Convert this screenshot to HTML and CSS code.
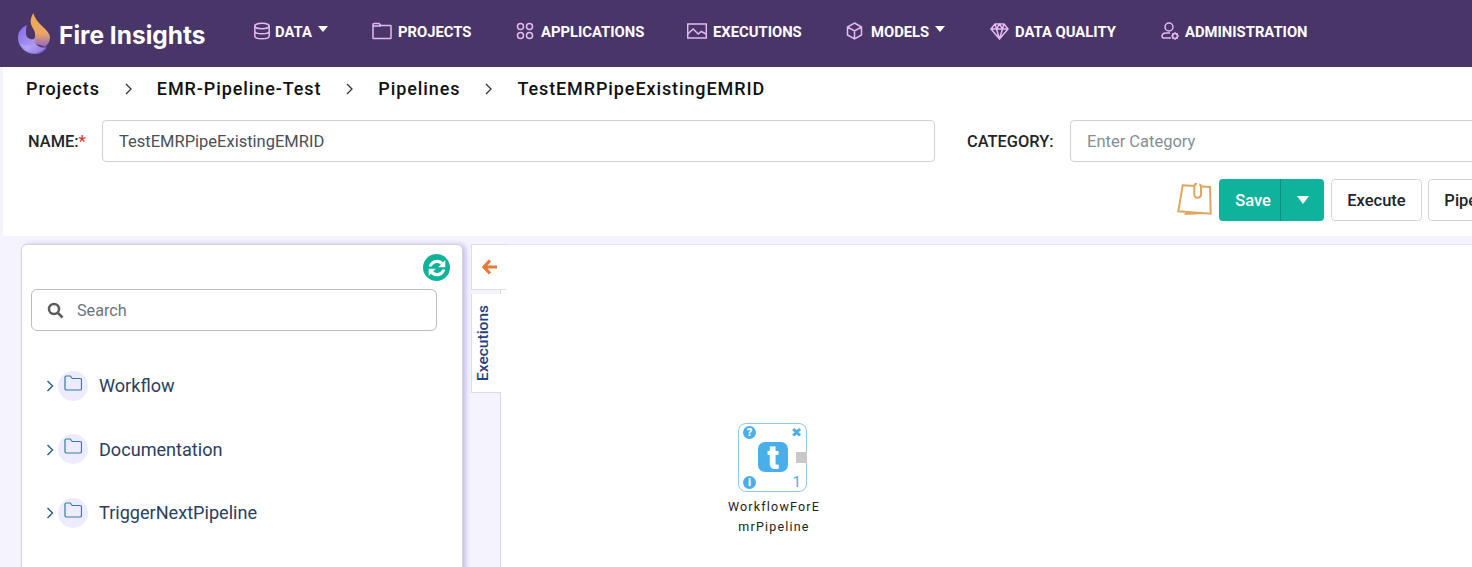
FILE: index.html
```html
<!DOCTYPE html>
<html lang="en">
<head>
    <meta charset="UTF-8">
    <meta name="viewport" content="width=device-width, initial-scale=1.0">
    <title>Fire Insights</title>
    <link rel="stylesheet" href="styles.css">
</head>
<body>
    <header class="navbar">
        <a class="brand">
            <svg class="brand-logo" width="34" height="42" viewBox="0 0 34 42">
                <defs>
                    <linearGradient id="flame" x1="0.5" y1="0" x2="0.5" y2="1">
                        <stop offset="0" stop-color="#f2ab4a"/>
                        <stop offset="0.6" stop-color="#eaa765"/>
                        <stop offset="1" stop-color="#8f63c6"/>
                    </linearGradient>
                    <linearGradient id="bowl" x1="0" y1="0" x2="1" y2="1">
                        <stop offset="0" stop-color="#7f69ea"/>
                        <stop offset="0.55" stop-color="#a995f0"/>
                        <stop offset="1" stop-color="#6a46d0"/>
                    </linearGradient>
                </defs>
                <path d="M16.300 0C14 4 13 8 14 11c1 4 5 7 4 13-1 3-4 5-5 6 7 1 13 3 15 4 5-4 6-10 4-13C29 15 19 10 16.300 0z" fill="url(#flame)"/>
                <path d="M9.700 12C4 15 1 19 1 25c0 8 7 16 17 16 6 0 10-3 12-7-5 2-10-1-12-4 1-2 0-4-1-4-4 1-8-1-8-6 0-3 .2-5.500.700-8z" fill="url(#bowl)"/>
                <path d="M3 31c5 2 11 2 15-1 2 3 6 5 10 4.500-2 3-6 5.500-10 5.500-6 0-12-4-15-9z" fill="#c9bdf6" opacity="0.350"/>
            </svg>
            <span class="brand-name">Fire Insights</span>
        </a>
        <nav class="nav-list">
            <a class="nav-item nav-data">
                <svg class="nav-icon" width="18" height="18" viewBox="0 0 18 18"><ellipse cx="9" cy="4" rx="7.200" ry="2.800"/><path d="M1.800 4v10c0 1.600 3.200 2.800 7.200 2.800s7.200-1.200 7.200-2.800V4M1.800 9c0 1.600 3.200 2.800 7.200 2.800s7.200-1.200 7.200-2.800"/></svg>
                <span>DATA</span><i class="caret"></i>
            </a>
            <a class="nav-item nav-projects">
                <svg class="nav-icon" width="20" height="18" viewBox="0 0 20 18"><path d="M1 16V2.500C1 2 1.400 1.500 2 1.500h5l2 2h9.500c.3 0 .5.200.5.500v12c0 .3-.2.500-.5.500H1.500c-.3 0-.5-.2-.5-.5zM1 4h8"/></svg>
                <span>PROJECTS</span>
            </a>
            <a class="nav-item nav-apps">
                <svg class="nav-icon" width="18" height="18" viewBox="0 0 18 18"><circle cx="4.500" cy="4.500" r="3"/><circle cx="13.500" cy="4.500" r="3"/><circle cx="4.500" cy="13.500" r="3"/><circle cx="13.500" cy="13.500" r="3"/></svg>
                <span>APPLICATIONS</span>
            </a>
            <a class="nav-item nav-exec">
                <svg class="nav-icon" width="20" height="16" viewBox="0 0 20 16"><rect x="0.700" y="1" width="18.600" height="14"/><path d="M0.700 11l5.500-5 5 5 3-2.500 5 2.500"/></svg>
                <span>EXECUTIONS</span>
            </a>
            <a class="nav-item nav-models">
                <svg class="nav-icon" width="17" height="18" viewBox="0 0 17 18"><path d="M8.500 1l7 4v8l-7 4-7-4V5zM1.500 5l7 4 7-4M8.500 9v8"/></svg>
                <span>MODELS</span><i class="caret"></i>
            </a>
            <a class="nav-item nav-quality">
                <svg class="nav-icon" width="19" height="17" viewBox="0 0 19 17"><path d="M5 1h9l4 5-8.500 10L1 6zM1 6h17M6.500 6l3 10 3-10M5 1l1.500 5 3-5 3 5L14 1"/></svg>
                <span>DATA QUALITY</span>
            </a>
            <a class="nav-item nav-admin">
                <svg class="nav-icon" width="18" height="18" viewBox="0 0 18 18"><circle cx="8" cy="5" r="4"/><path d="M9 11H5c-2.500 0-4 1.500-4 3.500 0 1 .6 1.500 1.500 1.500H10"/><circle cx="14" cy="14" r="2.400"/><path d="M14 10.200v1.400M14 16.400v1.400M10.200 14h1.400M16.400 14h1.400M11.400 11.400l1 1M15.600 15.600l1 1M16.600 11.400l-1 1M12.400 15.600l-1 1"/></svg>
                <span>ADMINISTRATION</span>
            </a>
        </nav>
    </header>

    <section class="toolbar">
        <div class="breadcrumb">
            <span>Projects</span>
            <svg class="crumb-sep" width="9" height="12" viewBox="0 0 9 12"><path d="M2 1l5 5-5 5"/></svg>
            <span>EMR-Pipeline-Test</span>
            <svg class="crumb-sep" width="9" height="12" viewBox="0 0 9 12"><path d="M2 1l5 5-5 5"/></svg>
            <span>Pipelines</span>
            <svg class="crumb-sep" width="9" height="12" viewBox="0 0 9 12"><path d="M2 1l5 5-5 5"/></svg>
            <span>TestEMRPipeExistingEMRID</span>
        </div>
        <div class="form-row">
            <label class="field-label name-label">NAME:<span class="required">*</span></label>
            <input class="field-input name-input" type="text" value="TestEMRPipeExistingEMRID">
            <label class="field-label category-label">CATEGORY:</label>
            <input class="field-input category-input" type="text" placeholder="Enter Category">
        </div>
        <div class="actions">
            <svg class="note-icon" width="36" height="36" viewBox="0 0 36 36">
                <path class="note-back" d="M7 33l26.500-1.300.500-4-25 2z"/>
                <path class="note-line" d="M5.700 3.300L33 5l.700 26.700-32.400-2.400z"/>
                <path class="note-line" d="M20 1.700c-1.700 0-2.700 1-2.700 2.300v8c0 2.200 1.300 3.700 3.200 3.700S24 14.200 24 12V4.500c0-1.300-.8-2-1.800-2"/>
            </svg>
            <div class="split-btn">
                <button class="btn-save">Save</button>
                <button class="btn-toggle"><i class="caret"></i></button>
            </div>
            <button class="btn-plain btn-execute">Execute</button>
            <button class="btn-plain btn-pipeline">Pipeline</button>
        </div>
    </section>

    <main class="workspace">
        <aside class="side-panel">
            <div class="panel-top">
                <span class="refresh">
                    <svg width="22" height="22" viewBox="0 0 18 18"><path d="M2.300 7.800C3 4.500 5.700 2.200 9 2.200c2 0 3.700.8 5 2.100L15.800 2.500v5.900H9.900l2.200-2.100C11.400 5.500 10.300 5 9 5 7 5 5.400 6.100 4.700 7.800zM15.700 10.200c-.7 3.300-3.400 5.600-6.700 5.600-2 0-3.700-.8-5-2.100l-1.800 1.800V9.600h5.900l-2.200 2.100c.7.800 1.800 1.300 3.100 1.300 2 0 3.600-1.100 4.300-2.800z"/></svg>
                </span>
            </div>
            <div class="search-box">
                <svg width="17" height="17" viewBox="0 0 17 17"><circle cx="7" cy="7" r="5"/><path d="M11 11l4.500 4.500"/></svg>
                <span>Search</span>
            </div>
            <ul class="tree">
                <li class="tree-row">
                    <svg class="tree-arrow" width="8" height="12" viewBox="0 0 8 12"><path d="M1.500 1l5 5-5 5"/></svg>
                    <span class="tree-folder"><svg width="18" height="16" viewBox="0 0 18 16"><path d="M1 13.500v-11C1 1.700 1.500 1 2.300 1h4l2 2.500h7.700c.9 0 1.500.6 1.500 1.500v8.500c0 .9-.6 1.500-1.500 1.500H2.500C1.600 15 1 14.400 1 13.500z"/></svg></span>
                    <span class="tree-name">Workflow</span>
                </li>
                <li class="tree-row">
                    <svg class="tree-arrow" width="8" height="12" viewBox="0 0 8 12"><path d="M1.500 1l5 5-5 5"/></svg>
                    <span class="tree-folder"><svg width="18" height="16" viewBox="0 0 18 16"><path d="M1 13.500v-11C1 1.700 1.500 1 2.300 1h4l2 2.500h7.700c.9 0 1.500.6 1.500 1.500v8.500c0 .9-.6 1.500-1.500 1.500H2.500C1.600 15 1 14.400 1 13.500z"/></svg></span>
                    <span class="tree-name">Documentation</span>
                </li>
                <li class="tree-row">
                    <svg class="tree-arrow" width="8" height="12" viewBox="0 0 8 12"><path d="M1.500 1l5 5-5 5"/></svg>
                    <span class="tree-folder"><svg width="18" height="16" viewBox="0 0 18 16"><path d="M1 13.500v-11C1 1.700 1.500 1 2.300 1h4l2 2.500h7.700c.9 0 1.500.6 1.500 1.500v8.500c0 .9-.6 1.500-1.500 1.500H2.500C1.600 15 1 14.400 1 13.500z"/></svg></span>
                    <span class="tree-name">TriggerNextPipeline</span>
                </li>
            </ul>
        </aside>

        <div class="tabs">
            <div class="tab-collapse">
                <svg width="16" height="16" viewBox="0 0 16 16"><path d="M8 1.500L2 8l6 6.500M2.500 8H15"/></svg>
            </div>
            <div class="tab-executions"><span>Executions</span></div>
        </div>

        <div class="canvas">
            <div class="node">
                <div class="node-box">
                    <span class="node-badge node-help">?</span>
                    <span class="node-close">&#10006;</span>
                    <span class="node-glyph">t</span>
                    <span class="node-port"></span>
                    <span class="node-badge node-info">i</span>
                    <span class="node-count">1</span>
                </div>
                <div class="node-label">WorkflowForE<br>mrPipeline</div>
            </div>
        </div>
    </main>
</body>
</html>
```

FILE: styles.css
```css
* {
    box-sizing: border-box;
}

html, body {
    height: 567px;
}

body {
    margin: 0;
    overflow: hidden;
    background: #f5f4fe;
    font-family: Roboto, sans-serif;
}

/* top bar */
.navbar {
    display: flex;
    height: 67px;
    background: #4a3569;
    color: #fff;
}

.brand {
    display: flex;
    align-items: flex-start;
    width: 253px;
    padding: 13px 0 0 17px;
}

.brand-name {
    margin: 6px 0 0 8px;
    font-family: Inter, sans-serif;
    font-size: 24.500px;
    font-weight: 700;
    line-height: 32px;
}

.nav-list {
    display: flex;
    align-items: flex-start;
    padding-top: 23px;
}

.nav-item {
    display: flex;
    align-items: center;
    height: 18px;
    font-size: 14.800px;
    font-weight: 700;
}

.nav-icon {
    margin-right: 4px;
    margin-bottom: 2px;
    fill: none;
    stroke: #e3bbf3;
    stroke-width: 1.500;
}

.caret {
    display: inline-block;
    width: 0;
    height: 0;
    border-left: 5.500px solid transparent;
    border-right: 5.500px solid transparent;
    border-top: 6px solid #fff;
}

.nav-item .caret {
    margin: -6px 0 0 6px;
}

.nav-data { width: 119px; }
.nav-projects { width: 144px; }
.nav-apps { width: 171px; }
.nav-exec { width: 159px; }
.nav-models { width: 144px; }
.nav-quality { width: 171px; }

.nav-projects .nav-icon { margin-right: 6px; }
.nav-apps .nav-icon { margin-right: 7px; }
.nav-exec .nav-icon { margin-right: 6px; }
.nav-models .nav-icon { margin-right: 8px; }
.nav-quality .nav-icon { margin-right: 6px; }
.nav-admin .nav-icon { margin-right: 6px; }

/* breadcrumb, name form and buttons */
.toolbar {
    width: 1540px;
    height: 169px;
    margin-left: 3px;
    background: #fff;
}

.breadcrumb {
    display: flex;
    align-items: center;
    height: 43px;
    padding-left: 23px;
    color: #111;
    font-size: 18px;
    font-weight: 500;
    letter-spacing: 0.900px;
}

.crumb-sep {
    margin: 0 24px;
    fill: none;
    stroke: #333;
    stroke-width: 1.300;
}

.form-row {
    display: flex;
    align-items: center;
    height: 42px;
    margin-top: 10px;
    padding-left: 25px;
}

.field-label {
    color: #212529;
    font-size: 16.400px;
    font-weight: 500;
}

.name-label {
    width: 74px;
}

.required {
    color: #e0352b;
}

.field-input {
    height: 42px;
    padding: 0 16px;
    border: 1px solid #ced1d6;
    border-radius: 4px;
    background: #fff;
    color: #495057;
    font-family: Roboto, sans-serif;
    font-size: 16.500px;
}

.field-input::placeholder {
    color: #868e96;
}

.name-input {
    width: 833px;
}

.category-label {
    width: 103px;
    margin-left: 32px;
}

.category-input {
    flex: 1;
}

.actions {
    display: flex;
    align-items: center;
    justify-content: flex-end;
    height: 42px;
    margin-top: 17px;
    padding-right: 23px;
}

.note-icon {
    margin-right: 6px;
}

.note-back {
    fill: #e2a55f;
}

.note-line {
    stroke: #e2a55f;
    stroke-width: 2;
    fill: #fff;
}

.split-btn {
    display: flex;
    height: 42px;
    margin-right: 7px;
    border-radius: 4px;
    background: #0fb29b;
}

.split-btn button {
    height: 42px;
    border: 0;
    background: none;
    color: #fff;
    font-family: Roboto, sans-serif;
    font-size: 16.500px;
    font-weight: 500;
}

.split-btn .btn-save {
    width: 62px;
    padding: 0 0 0 7px;
    border-right: 1px solid #0b8f7d;
}

.btn-toggle {
    width: 43px;
    padding: 0 0 4px;
}

.btn-toggle .caret {
    border-left-width: 6.500px;
    border-right-width: 6.500px;
    border-top-width: 8px;
}

.btn-plain {
    height: 42px;
    margin-right: 6px;
    padding: 0;
    border: 1px solid #d3d5d9;
    border-radius: 4px;
    background: #fff;
    color: #212529;
    font-family: Roboto, sans-serif;
    font-size: 16.500px;
    font-weight: 500;
}

.btn-execute { width: 91px; }
.btn-pipeline { width: 92px; margin-right: 0; }

/* lower area */
.workspace {
    display: flex;
    height: 331px;
    margin-top: 8px;
    padding-left: 21px;
}

.side-panel {
    flex: none;
    width: 442px;
    height: 340px;
    padding: 9px 9px 0;
    border: 1px solid #d4d4dc;
    border-radius: 6px;
    background: #fff;
    box-shadow: 3px 0 5px #c5c0ea;
}

.panel-top {
    display: flex;
    justify-content: flex-end;
    height: 35px;
    margin-right: 3px;
}

.refresh {
    display: flex;
    align-items: center;
    justify-content: center;
    width: 27px;
    height: 27px;
    border-radius: 50%;
    background: #0fb29b;
}

.refresh svg {
    fill: #fff;
}

.search-box {
    display: flex;
    align-items: center;
    width: 406px;
    height: 42px;
    padding-left: 15px;
    border: 1px solid #bcbcc0;
    border-radius: 6px;
    color: #6c757d;
    font-size: 16.200px;
}

.search-box svg {
    margin-right: 13px;
    fill: none;
    stroke: #5c5c5c;
    stroke-width: 2.500;
}

.tree {
    margin: 23px 0 0;
    padding: 0 0 0 15px;
    list-style: none;
}

.tree-row {
    display: flex;
    align-items: center;
    height: 63.500px;
}

.tree-arrow {
    margin: 1px 4px 0 0;
    fill: none;
    stroke: #2b5a78;
    stroke-width: 1.400;
}

.tree-folder {
    display: flex;
    justify-content: center;
    padding-top: 4px;
    width: 30px;
    height: 30px;
    border-radius: 50%;
    background: #edebfc;
}

.tree-folder svg {
    fill: none;
    stroke: #2f7ea8;
    stroke-width: 1.200;
}

.tree-name {
    margin-left: 11px;
    color: #29405e;
    font-size: 18.100px;
}

.tabs {
    flex: none;
    width: 30px;
    margin-left: 8px;
    border-right: 1px solid #d5d5e6;
}

.tab-collapse {
    position: relative;
    z-index: 1;
    display: flex;
    align-items: center;
    justify-content: center;
    width: 35px;
    height: 46px;
    padding-left: 2px;
    border: 1px solid #dcdce8;
    border-right: 0;
    background: #fff;
}

.tab-collapse svg {
    fill: none;
    stroke: #e5793a;
    stroke-width: 3.200;
}

.tab-executions {
    display: flex;
    align-items: center;
    justify-content: center;
    width: 30px;
    height: 99px;
    margin-top: 4px;
    padding-right: 7px;
    border-bottom: 1px solid #dcdce8;
    border-left: 1px solid #dcdce8;
    background: #fff;
}

.tab-executions span {
    color: #1f4480;
    font-size: 15.500px;
    font-weight: 500;
    writing-mode: vertical-rl;
    transform: rotate(180deg);
}

.canvas {
    position: relative;
    flex: 1;
    border-top: 1px solid #e6e6f0;
    background: #fff;
}

/* node sits at its own spot on the canvas */
.node {
    position: absolute;
    left: 222px;
    top: 178px;
    width: 100px;
}

.node-box {
    position: relative;
    width: 69px;
    height: 69px;
    margin-left: 15px;
    border: 1px solid #8fc7f2;
    border-radius: 8px;
    background: #fff;
}

.node-badge {
    position: absolute;
    left: 4px;
    width: 13px;
    height: 13px;
    border-radius: 50%;
    background: #4aaee8;
    color: #fff;
    font-size: 11px;
    font-weight: 900;
    line-height: 13px;
    text-align: center;
}

.node-help { top: 2px; }
.node-info { bottom: 2px; }

.node-close {
    position: absolute;
    top: 1px;
    right: 4px;
    color: #4aaee8;
    font-family: "DejaVu Sans", sans-serif;
    font-size: 13px;
    line-height: 15px;
}

.node-glyph {
    position: absolute;
    left: 19px;
    top: 18px;
    width: 30px;
    height: 30px;
    border-radius: 7px;
    background: #4aaee8;
    color: #fff;
    font-size: 34px;
    font-weight: 900;
    line-height: 30px;
    text-align: center;
}

.node-port {
    position: absolute;
    right: -1px;
    top: 28px;
    width: 11px;
    height: 11px;
    background: #c8c8c8;
}

.node-count {
    position: absolute;
    right: 5px;
    bottom: 1px;
    color: #4aaee8;
    font-size: 15px;
    line-height: 15px;
}

.node-label {
    margin: 5px -5px 0 -3px;
    color: #222;
    font-size: 12.500px;
    letter-spacing: 1.200px;
    line-height: 20px;
    text-align: center;
}
```
